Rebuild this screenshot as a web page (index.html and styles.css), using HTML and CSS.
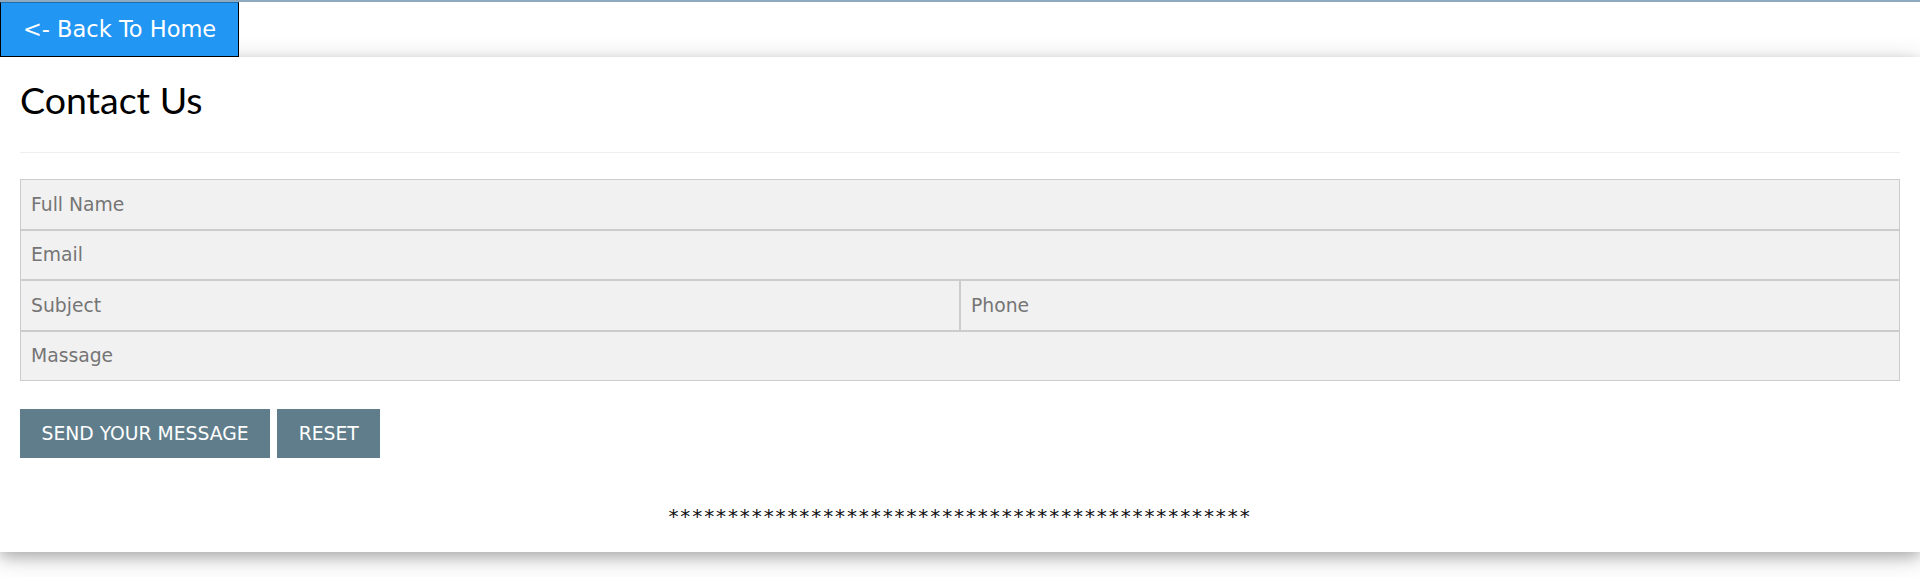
FILE: index.html
```html
<!DOCTYPE html>
<html>
<head>
<meta charset="utf-8">
<title>Contact Us</title>
<link rel="stylesheet" href="styles.css">
</head>
<body>
<div class="topbar">
  <a class="back-btn" href="#">&lt;- Back To Home</a>
</div>
<div class="card">
  <h2 class="title">Contact Us</h2>
  <hr class="rule">
  <form class="form">
    <div class="field">Full Name</div>
    <div class="field">Email</div>
    <div class="row">
      <div class="field">Subject</div>
      <div class="field">Phone</div>
    </div>
    <div class="field">Massage</div>
    <div class="actions">
      <button type="button" class="btn">SEND YOUR MESSAGE</button>
      <button type="button" class="btn">RESET</button>
    </div>
  </form>
  <div class="stars">*************************************************</div>
</div>
<div class="page-end"></div>
</body>
</html>
```

FILE: styles.css
```css
html, body {
  margin: 0;
  padding: 0;
  background: #fff;
}
body {
  border-top: 2px solid #8eaac0;
  font-family: "DejaVu Sans", Verdana, sans-serif;
  font-size: 18.75px;
  color: #000;
}
.topbar {
  height: 55px;
  line-height: 0;
}
.back-btn {
  display: inline-flex;
  align-items: center;
  box-sizing: border-box;
  height: 55px;
  padding: 0 22px 0 22px;
  background: #2196f3;
  color: #fff;
  border: 1px solid #000;
  border-top-color: #1a6fb3;
  font-size: 22.5px;
  line-height: 1;
  text-decoration: none;
}
.card {
  background: #fff;
  padding: 0 20px 0 20px;
  box-shadow: 0 5px 12.5px 0 rgba(0,0,0,0.2), 0 5px 25px 0 rgba(0,0,0,0.19);
  height: 495px;
  box-sizing: border-box;
  overflow: hidden;
}
.page-end {
  height: 25px;
}
.title {
  margin: 20px 0 0 0;
  font-family: Lato, "Open Sans", sans-serif;
  font-weight: 400;
  font-size: 37.5px;
  line-height: 45px;
  height: 45px;
}
.rule {
  margin: 30px 0 0 0;
  border: 0;
  border-top: 1px solid #eeeeee;
  height: 0;
}
.form {
  margin-top: 26px;
  display: flex;
  flex-direction: column;
}
.row {
  display: flex;
}
.row .field {
  flex: 1 1 0;
}
.field {
  box-sizing: border-box;
  height: 50.5px;
  display: flex;
  align-items: center;
  padding: 0 10px 0 10px;
  background: #f1f1f1;
  border: 1px solid #cccccc;
  color: #757575;
  font-size: 18.75px;
}
.actions {
  margin-top: 28px;
  display: flex;
  gap: 7px;
}
.btn {
  box-sizing: border-box;
  height: 49px;
  padding: 0 21.5px;
  border: 0;
  background: #607d8b;
  color: #fff;
  font-family: "DejaVu Sans", Verdana, sans-serif;
  font-size: 18.75px;
  cursor: pointer;
}
.stars {
  margin-top: 46px;
  text-align: center;
  font-size: 20px;
  letter-spacing: 1.9px;
  line-height: 24px;
  color: #111;
}
```
